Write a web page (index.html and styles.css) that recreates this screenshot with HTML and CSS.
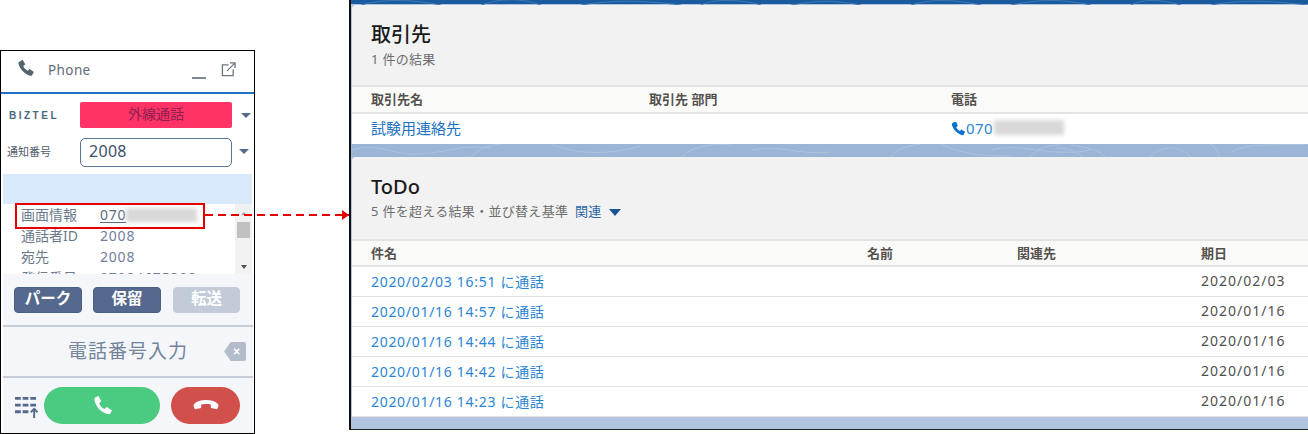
FILE: index.html
```html
<!DOCTYPE html>
<html lang="ja">
<head>
<meta charset="utf-8">
<title>Phone</title>
<link rel="stylesheet" href="styles.css">
</head>
<body>
<div class="stage">
  <section class="phone">
    <header class="ph-head">
      <svg class="ph-icon" viewBox="0 0 24 24"><path d="M3 3.500 7.500 1l3.600 6-2.700 2.400c.9 2.500 3.200 5.100 6 6.300l2.500-2.500 5.600 4-2.400 4.300c-.5.800-1.500 1.200-2.500.9C9.800 19.800 3.800 13.300 2 6.200c-.3-1.100.2-2.100 1-2.700Z"/></svg>
      <span class="ph-title">Phone</span>
      <span class="ph-min"></span>
      <svg class="ph-pop" viewBox="0 0 16 16"><path d="M8 3H1.500v11.500H13V8M6.500 9.500 14.500 1.500M9.500 1H15v5.500"/></svg>
    </header>
    <div class="ph-row ph-row-a">
      <span class="logo">BIZTEL</span>
      <span class="state">外線通話</span>
      <span class="caret"></span>
    </div>
    <div class="ph-row ph-row-b">
      <span class="ph-label">通知番号</span>
      <span class="select">2008</span>
      <span class="caret caret-b"></span>
    </div>
    <div class="band"></div>
    <div class="info">
      <div class="info-list">
        <div class="info-row"><span class="k">画面情報</span><span class="v link">070</span><span class="blur b1"></span></div>
        <div class="info-row"><span class="k">通話者ID</span><span class="v">2008</span></div>
        <div class="info-row"><span class="k">宛先</span><span class="v">2008</span></div>
        <div class="info-row"><span class="k">発信番号</span><span class="v">07084675308</span></div>
      </div>
      <div class="scroll">
        <span class="sc-up"></span>
        <span class="sc-thumb"></span>
        <span class="sc-down"></span>
      </div>
    </div>
    <div class="ph-foot">
      <div class="btns">
        <span class="btn">パーク</span>
        <span class="btn">保留</span>
        <span class="btn off">転送</span>
      </div>
      <div class="dial">
        <span class="dial-text">電話番号入力</span>
        <svg class="back" viewBox="0 0 23 20"><path class="back-s" d="M7 0h14a2 2 0 0 1 2 2v16a2 2 0 0 1-2 2H7L0 10Z"/><path class="back-x" d="m10.500 7 5.500 6M16 7l-5.500 6"/></svg>
      </div>
      <div class="calls">
        <svg class="pad" viewBox="0 0 26 23">
          <path class="pad-d" d="M1 1h6v3H1zM9 1h6v3H9zM17 1h6v3h-6zM1 8h6v3H1zM9 8h6v3H9zM17 8h6v3h-6zM1 15h6v3H1zM9 15h6v3H9z"/>
          <path class="pad-a" d="M21 23v-9M17.500 17l3.500-3.500 3.500 3.500"/>
        </svg>
        <span class="call go"><svg viewBox="0 0 24 24"><path d="M4 2.500 7.500 1l3 6-2.300 2.300c.8 2.500 3.500 5.700 6.300 6.700l2.300-2.200 6 3.500-1.700 3.500c-.5.900-1.500 1.300-2.500 1C10.500 20.400 4.500 13.500 2.800 6c-.3-1.500.2-2.800 1.200-3.500Z"/></svg></span>
        <span class="call end"><svg viewBox="0 0 24 12"><path d="M12 1C7 1 3 2.300 1 4.500c-.6.700-.7 1.600-.3 2.500l1 2.500 5.800-1.300V5.300c2.300-.8 6.700-.8 9 0v2.900l5.800 1.300 1-2.500c.4-.9.300-1.800-.3-2.500C21 2.300 17 1 12 1Z"/></svg></span>
      </div>
    </div>
  </section>

  <section class="sf">
    <svg class="topo" viewBox="0 0 957 429" preserveAspectRatio="none">
      <path class="topo-top" d="M10 5c20-6 50-6 80 0M130 5c20-7 40-7 60 0M230 5c30-5 60-5 100 0M350 5c10-6 40-6 60 0M440 5c30-5 40-5 70 0M560 5c20-6 40-6 70 0M660 5c30-6 50-6 80 0M780 5c10-6 30-6 50 0M860 5c30-5 50-5 97 0"/>
      <path class="topo-strip" d="M0 150c30-8 40 6 70 4s40-10 70-6M120 157c8-8 16-12 30-13M200 144c30 12 60 10 90 2M330 157c10-10 30-14 50-12M400 150c30-6 50 6 80 2M540 157c6-8 14-11 30-13M590 144c20 10 40 12 70 12M640 150c30-8 60 8 100 0M680 157c4-7 14-12 30-12M705 148c16 0 24 6 26 9M720 145c16 2 30 6 34 12M800 157c8-12 30-12 40 0M860 144c6 6 8 10 8 13M880 152c20-10 40-6 77-8"/>
    </svg>
    <div class="card card-a">
      <div class="card-head">
        <h2 class="card-title">取引先</h2>
        <p class="card-sub">1 件の結果</p>
      </div>
      <div class="tbl tbl-a thead">
        <span>取引先名</span><span>取引先 部門</span><span>電話</span>
      </div>
      <div class="tbl tbl-a trow first">
        <a class="lnk jp">試験用連絡先</a>
        <span></span>
        <span class="tel">
          <svg class="tel-i" viewBox="0 0 24 24"><path d="M3.500 2.500 8 1l3 6.500-2.500 2.300c1 2.500 3.300 5 5.700 6l2.300-2.300 6 3.500-2 4.500c-.5 1-1.500 1.400-2.500 1.200C10 20.500 3.500 13.800 1.500 6.500c-.3-1.700.7-3.200 2-4Z"/></svg><a class="lnk tel-n">070</a><span class="blur b2"></span>
        </span>
      </div>
    </div>
    <div class="card card-b">
      <div class="card-head">
        <h2 class="card-title todo">ToDo</h2>
        <p class="card-sub">5 件を超える結果・並び替え基準 <a class="sort">関連</a><span class="sort-c"></span></p>
      </div>
      <div class="tbl tbl-b thead">
        <span>件名</span><span>名前</span><span>関連先</span><span>期日</span>
      </div>
      <div class="tbl tbl-b trow"><a class="lnk">2020/02/03 16:51 に通話</a><span></span><span></span><span class="date">2020/02/03</span></div>
      <div class="tbl tbl-b trow"><a class="lnk">2020/01/16 14:57 に通話</a><span></span><span></span><span class="date">2020/01/16</span></div>
      <div class="tbl tbl-b trow"><a class="lnk">2020/01/16 14:44 に通話</a><span></span><span></span><span class="date">2020/01/16</span></div>
      <div class="tbl tbl-b trow"><a class="lnk">2020/01/16 14:42 に通話</a><span></span><span></span><span class="date">2020/01/16</span></div>
      <div class="tbl tbl-b trow"><a class="lnk">2020/01/16 14:23 に通話</a><span></span><span></span><span class="date">2020/01/16</span></div>
    </div>
  </section>

  <div class="mark"></div>
  <div class="arrow"></div>
</div>
</body>
</html>
```
FILE: styles.css
```css
* { box-sizing: border-box; }
html, body { margin: 0; padding: 0; background: #fff; }
body { font-family: "Noto Sans", "Noto Sans CJK JP", sans-serif; width: 1308px; height: 434px; overflow: hidden; }
p, h2 { margin: 0; }

.stage { position: relative; width: 1308px; height: 434px; display: flex; align-items: flex-start; justify-content: space-between; }

/* phone */
.phone { width: 255px; height: 384px; margin-top: 50px; border: 1px solid #000; display: flex; flex-direction: column; background: #fff; overflow: hidden; }
.ph-head { height: 43px; flex: none; border-bottom: 2px solid #1b74c5; display: flex; align-items: center; padding: 0 17px 0 16px; color: #54698d; }
.ph-icon { width: 18px; height: 18px; fill: #54646f; margin: -7px 13px 0 0; }
.ph-title { font-size: 13.500px; color: #5f6b7a; letter-spacing: .4px; margin-top: -4px; }
.ph-min { margin-left: auto; margin-top: 13px; width: 14px; height: 2px; background: #7b8794; }
.ph-pop { width: 15px; height: 15px; fill: none; stroke: #6a7683; stroke-width: 1.400; margin: -4px 1px 0 15px; }

.ph-row { display: flex; align-items: center; flex: none; }
.ph-row-a { margin-top: 8px; height: 26px; padding-left: 8px; }
.ph-row-b { margin-top: 10px; height: 29px; padding-left: 6px; }
.logo { width: 71px; font-family: "Liberation Sans", sans-serif; font-weight: 700; font-size: 10px; letter-spacing: 2.500px; color: #4a6a80; }
.state { width: 152px; height: 26px; background: #ff3366; border-radius: 2px; color: #8a1f50; font-size: 14px; line-height: 23px; text-align: center; }
.caret { margin-left: 9px; width: 0; height: 0; border: 5px solid transparent; border-top: 5px solid #54698d; border-bottom: 0; }
.caret-b { margin-left: 7px; margin-top: -2px; }
.ph-label { width: 73px; font-size: 11px; color: #54606e; margin-top: -3px; }
.select { width: 152px; height: 29px; border: 1px solid #5d7796; border-radius: 5px; font-size: 16px; line-height: 25px; padding-left: 8px; color: #3b5068; letter-spacing: .3px; }
.band { flex: none; height: 30px; margin: 7px 2px 0; background: #d7e9fb; }

.info { flex: none; height: 70px; display: flex; overflow: hidden; padding-left: 20px; }
.info-list { flex: 1; }
.info-row { height: 21px; display: flex; align-items: center; font-size: 14px; line-height: 21px; }
.k { width: 79px; flex: none; color: #6b7a8c; }
.v { letter-spacing: .8px; color: #6f80a0; }
.v.link { color: #5a6b7d; text-decoration: underline; text-underline-offset: 2px; }
.blur { display: block; background: #d8d8d8; filter: blur(2px); }
.b1 { width: 71px; height: 14px; }
.scroll { width: 17px; margin-right: 2px; height: 100%; background: #f2f2f2; display: flex; flex-direction: column; align-items: center; flex: none; }
.sc-up { margin-top: 8px; width: 0; height: 0; border: 3px solid transparent; border-bottom: 3px solid #a6a6a6; border-top: 0; }
.sc-thumb { margin-top: 7px; width: 13px; height: 16px; background: #c1c1c1; }
.sc-down { margin-top: 27px; width: 0; height: 0; border: 3px solid transparent; border-top: 4px solid #505050; border-bottom: 0; }

.ph-foot { flex: 1; margin: 0 1px 0 2px; background: #f4f6fa; display: flex; flex-direction: column; min-height: 0; }
.btns { flex: none; height: 53px; display: flex; align-items: flex-start; padding: 13px 12px 0 11px; gap: 11px; border-bottom: 2px solid #c5ccd5; }
.btn { width: 68px; height: 26px; background: #54698d; border: 1px solid #4b6080; border-radius: 4px; color: #fff; font-weight: 700; font-size: 15.500px; line-height: 20px; text-align: center; }
.btn.off { background: #c3cbd8; border-color: #c3cbd8; width: 67px; margin-left: 1px; }
.dial { flex: none; height: 51px; display: flex; align-items: center; justify-content: flex-end; padding: 0 7px 0 0; border-bottom: 2px solid #c5ccd5; }
.dial-text { font-size: 19px; color: #73849a; letter-spacing: 1px; margin: -3px 36px 0 0; }
.back { width: 22px; height: 19px; }
.back-s { fill: #b3bccb; }
.back-x { fill: none; stroke: #fff; stroke-width: 1.600; }
.calls { flex: 1; display: flex; align-items: center; padding: 0 0 1px 11px; }
.pad { width: 25px; height: 22px; flex: none; margin-right: 5px; margin-top: 4px; }
.pad-d { fill: #54698d; }
.pad-a { fill: none; stroke: #54698d; stroke-width: 2; }
.call { height: 37px; border-radius: 19px; display: flex; align-items: center; justify-content: center; flex: none; }
.call svg { fill: #fff; }
.go { width: 116px; background: #4bca81; }
.go svg { width: 21px; height: 21px; }
.end { width: 69px; margin-left: 11px; background: #d2504b; }
.end svg { width: 26px; height: 13px; }

/* salesforce panel */
.sf { width: 959px; height: 430px; position: relative; background: #b0c4df; border-left: 2px solid #101010; border-bottom: 1px solid #222; padding: 5px 0 0; display: flex; flex-direction: column; gap: 13px; overflow: hidden; }
.sf::before { content: ""; position: absolute; left: 0; right: 0; top: 0; height: 4px; background: #1a5a9e; }
.sf::after { content: ""; position: absolute; left: 0; right: 0; top: 144px; height: 13px; background: #9bb5d6; }
.topo { position: absolute; inset: 0; z-index: 1; width: 100%; height: 100%; fill: none; stroke-width: 1; }
.topo-top { stroke: #3f78b3; }
.topo-strip { stroke: #aec3de; }
.card { position: relative; z-index: 2; background: #f2f2f2; margin-left: 1px; }
.card-a { height: 139px; border-radius: 4px 0 0 0; border-bottom: 1px solid #d4d4d4; }
.card-b { height: 260px; border-radius: 4px 0 0 0; border-bottom: 1px solid #d4d4d4; }
.card-head { padding-left: 19px; }
.card-a .card-head { height: 80px; padding-top: 16px; }
.card-b .card-head { height: 82px; padding-top: 16px; }
.card-title { font-size: 20px; font-weight: 500; color: #1a1a1a; line-height: 28px; }
.card-sub { font-size: 13px; color: #6e6e6e; line-height: 18px; margin-top: 1px; letter-spacing: .3px; }
.sort { color: #2b66a8; margin-left: 3px; }
.sort-c { display: inline-block; margin-left: 7px; width: 0; height: 0; border: 6px solid transparent; border-top: 7px solid #1b5297; border-bottom: 0; }

.tbl { display: grid; align-items: center; background: #fff; padding-left: 19px; border-bottom: 2px solid #e3e3e3; }
.tbl-a { grid-template-columns: 278px 302px 1fr; }
.tbl-b { grid-template-columns: 496px 150px 184px 1fr; }
.thead { height: 28px; background: #fafaf9; border-top: 2px solid #e3e3e3; font-weight: 700; color: #54514d; font-size: 13px; padding-bottom: 1px; }
.tbl-a.thead { height: 29px; padding-bottom: 2px; }
.trow { height: 30px; border-bottom-width: 1.500px; padding-bottom: 2px; }
.trow.first { border-bottom: 0; padding-bottom: 3px; }
.lnk { color: #2a85d6; font-size: 14px; letter-spacing: .7px; }
.lnk.jp { font-size: 15px; letter-spacing: 0; color: #1c72c4; }
.date { color: #505050; font-size: 14px; letter-spacing: 1px; }
.tel { display: flex; align-items: center; }
.tel-i { width: 15px; height: 15px; fill: #0b6fce; margin-top: 2px; }
.tel-n { font-size: 15px; letter-spacing: .4px; }
.b2 { width: 70px; height: 15px; margin-left: 1px; }

/* annotation overlays */
.mark { position: absolute; left: 15px; top: 203px; width: 190px; height: 26px; border: 2px solid #e60000; }
.arrow { position: absolute; left: 205px; top: 214px; width: 144px; height: 2px; background: repeating-linear-gradient(90deg, #e60000 0 8px, transparent 8px 13px); }
.arrow::after { content: ""; position: absolute; right: 0; top: -4px; width: 0; height: 0; border: 5px solid transparent; border-left: 7px solid #e60000; border-right: 0; }
```
